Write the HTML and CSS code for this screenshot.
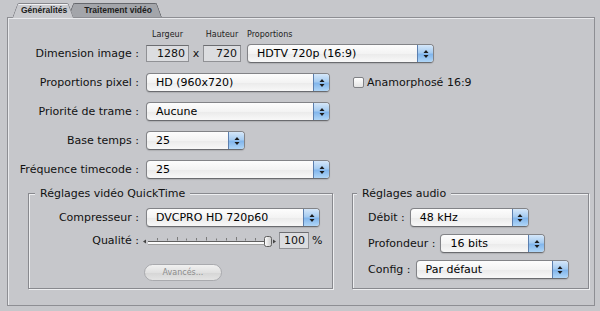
FILE: index.html
```html
<!DOCTYPE html>
<html lang="fr">
<head>
<meta charset="utf-8">
<title>Réglages</title>
<link rel="stylesheet" href="styles.css">
</head>
<body>
<div class="tabs">
  <div class="tab tab-active">Généralités</div>
  <div class="tab tab-inactive">Traitement vidéo</div>
</div>
<div class="panel">
  <div class="form">
    <div class="row row-head">
      <span></span>
      <div class="ctrls">
        <span class="hd hd-w">Largeur</span>
        <span class="hd hd-h">Hauteur</span>
        <span class="hd hd-p">Proportions</span>
      </div>
    </div>
    <div class="row">
      <span class="lbl">Dimension image :</span>
      <div class="ctrls">
        <span class="field f-w">1280</span><span class="times">x</span><span class="field f-h">720</span>
        <div class="select s-prop"><span class="val">HDTV 720p (16:9)</span><span class="arrow"><svg width="8" height="12" viewBox="0 0 8 12"><polygon points="1.5,5 6.5,5 4,2" fill="#1b1b1b"/><polygon points="1.5,7 6.5,7 4,10" fill="#1b1b1b"/></svg></span></div>
      </div>
    </div>
    <div class="row">
      <span class="lbl">Proportions pixel :</span>
      <div class="ctrls">
        <div class="select s-std"><span class="val">HD (960x720)</span><span class="arrow"><svg width="8" height="12" viewBox="0 0 8 12"><polygon points="1.5,5 6.5,5 4,2" fill="#1b1b1b"/><polygon points="1.5,7 6.5,7 4,10" fill="#1b1b1b"/></svg></span></div>
        <div class="check-wrap"><span class="checkbox"></span><span>Anamorphosé 16:9</span></div>
      </div>
    </div>
    <div class="row">
      <span class="lbl">Priorité de trame :</span>
      <div class="ctrls">
        <div class="select s-std"><span class="val">Aucune</span><span class="arrow"><svg width="8" height="12" viewBox="0 0 8 12"><polygon points="1.5,5 6.5,5 4,2" fill="#1b1b1b"/><polygon points="1.5,7 6.5,7 4,10" fill="#1b1b1b"/></svg></span></div>
      </div>
    </div>
    <div class="row">
      <span class="lbl">Base temps :</span>
      <div class="ctrls">
        <div class="select s-base"><span class="val">25</span><span class="arrow"><svg width="8" height="12" viewBox="0 0 8 12"><polygon points="1.5,5 6.5,5 4,2" fill="#1b1b1b"/><polygon points="1.5,7 6.5,7 4,10" fill="#1b1b1b"/></svg></span></div>
      </div>
    </div>
    <div class="row">
      <span class="lbl">Fréquence timecode :</span>
      <div class="ctrls">
        <div class="select s-std"><span class="val">25</span><span class="arrow"><svg width="8" height="12" viewBox="0 0 8 12"><polygon points="1.5,5 6.5,5 4,2" fill="#1b1b1b"/><polygon points="1.5,7 6.5,7 4,10" fill="#1b1b1b"/></svg></span></div>
      </div>
    </div>
  </div>

  <div class="groups">
    <div class="group g-video">
      <div class="gtitle">Réglages vidéo QuickTime</div>
      <div class="grow grow-a">
        <span class="lbl">Compresseur :</span>
        <div class="ctrls">
          <div class="select s-comp"><span class="val">DVCPRO HD 720p60</span><span class="arrow"><svg width="8" height="12" viewBox="0 0 8 12"><polygon points="1.5,5 6.5,5 4,2" fill="#1b1b1b"/><polygon points="1.5,7 6.5,7 4,10" fill="#1b1b1b"/></svg></span></div>
        </div>
      </div>
      <div class="grow grow-b">
        <span class="lbl">Qualité :</span>
        <div class="ctrls">
          <svg class="slider" width="134" height="16" viewBox="0 0 134 16">
            <defs>
              <linearGradient id="th" x1="0" y1="0" x2="1" y2="0">
                <stop offset="0" stop-color="#ffffff"/>
                <stop offset="1" stop-color="#c9c9c9"/>
              </linearGradient>
            </defs>
            <polygon points="0,8.5 3,6.5 3,10.5" fill="#444"/>
            <g stroke="#7a7a7a" stroke-width="1">
              <line x1="14.5" y1="5" x2="14.5" y2="7.5"/>
              <line x1="24.5" y1="5.5" x2="24.5" y2="7.5"/>
              <line x1="34.5" y1="4" x2="34.5" y2="7.5"/>
              <line x1="43.5" y1="5.5" x2="43.5" y2="7.5"/>
              <line x1="53.5" y1="5" x2="53.5" y2="7.5"/>
              <line x1="63.5" y1="4" x2="63.5" y2="7.5"/>
              <line x1="73.5" y1="5.5" x2="73.5" y2="7.5"/>
              <line x1="83.5" y1="5" x2="83.5" y2="7.5"/>
              <line x1="93.5" y1="4" x2="93.5" y2="7.5"/>
              <line x1="102.5" y1="5.5" x2="102.5" y2="7.5"/>
              <line x1="112.5" y1="5" x2="112.5" y2="7.5"/>
            </g>
            <rect x="5" y="8" width="118" height="1" fill="#5f5f5f"/>
            <rect x="5" y="9" width="118" height="2" fill="#fbfbfb"/>
            <rect x="5" y="11" width="118" height="1" fill="#a0a0a0"/>
            <rect x="121.5" y="3.5" width="7" height="10" rx="2" fill="url(#th)" stroke="#5e5e5e"/>
            <polygon points="130,6.5 133,8.5 130,10.5" fill="#444"/>
          </svg>
          <span class="field f-q">100</span><span class="pct">%</span>
        </div>
      </div>
      <div class="grow grow-c">
        <span></span>
        <div class="ctrls">
          <span class="btn">Avancés...</span>
        </div>
      </div>
    </div>

    <div class="group g-audio">
      <div class="gtitle gtitle-a">Réglages audio</div>
      <div class="arow arow-first">
        <span>Débit :</span>
        <div class="select s-debit"><span class="val">48 kHz</span><span class="arrow"><svg width="8" height="12" viewBox="0 0 8 12"><polygon points="1.5,5 6.5,5 4,2" fill="#1b1b1b"/><polygon points="1.5,7 6.5,7 4,10" fill="#1b1b1b"/></svg></span></div>
      </div>
      <div class="arow">
        <span>Profondeur :</span>
        <div class="select s-prof"><span class="val">16 bits</span><span class="arrow"><svg width="8" height="12" viewBox="0 0 8 12"><polygon points="1.5,5 6.5,5 4,2" fill="#1b1b1b"/><polygon points="1.5,7 6.5,7 4,10" fill="#1b1b1b"/></svg></span></div>
      </div>
      <div class="arow">
        <span>Config :</span>
        <div class="select s-conf"><span class="val">Par défaut</span><span class="arrow"><svg width="8" height="12" viewBox="0 0 8 12"><polygon points="1.5,5 6.5,5 4,2" fill="#1b1b1b"/><polygon points="1.5,7 6.5,7 4,10" fill="#1b1b1b"/></svg></span></div>
      </div>
    </div>
  </div>
</div>
</body>
</html>
```

FILE: styles.css
```css
html, body {
  margin: 0;
  padding: 0;
}

body {
  width: 600px;
  height: 311px;
  overflow: hidden;
  background: #c6c7cb;
  font-family: "DejaVu Sans", sans-serif;
  font-size: 11px;
  color: #111;
}

/* ---------- tabs ---------- */
.tabs {
  display: flex;
  align-items: flex-start;
  margin-top: 3px;
  padding-left: 12px;
  height: 15px;
  position: relative;
  z-index: 1;
}

.tab {
  position: relative;
  height: 15px;
  line-height: 14px;
  font-family: "Liberation Sans", sans-serif;
  font-weight: bold;
  font-size: 8.5px;
  color: #222;
  white-space: nowrap;
}

.tab-active {
  z-index: 2;
  padding: 0 7px 0 9px;
}

.tab-inactive {
  z-index: 1;
  height: 14px;
  margin-left: -6px;
  padding: 0 10px 0 16px;
  color: #1c1c1c;
}

.tab::before,
.tab::after {
  content: "";
  position: absolute;
  top: 0;
  bottom: 0;
  width: 60%;
  z-index: -1;
  border-top: 1px solid;
}

.tab::before {
  left: 0;
  border-left: 1px solid;
  border-top-left-radius: 2px;
  transform: skewX(-20deg);
  transform-origin: left bottom;
}

.tab::after {
  right: 0;
  border-right: 1px solid;
  border-top-right-radius: 2px;
  transform: skewX(20deg);
  transform-origin: right bottom;
}

.tab-active::before,
.tab-active::after {
  background: #c9cace;
  border-color: #85868b;
  box-shadow: inset 0 1px 0 #f2f2f4;
}

.tab-inactive::before,
.tab-inactive::after {
  background: #a3a5aa;
  border-color: #66686d;
}

/* ---------- panel ---------- */
.panel {
  margin: -1px 0 0 7px;
  width: 586px;
  height: 287px;
  border: 1px solid #8d8e93;
  box-shadow: inset 1px 1px 0 #e9eaed;
}

.form {
  display: flex;
  flex-direction: column;
  gap: 10px;
  padding-top: 12px;
}

.row {
  display: grid;
  grid-template-columns: 131px auto;
  column-gap: 7px;
  align-items: center;
  height: 19px;
}

.row-head {
  height: 10px;
  margin-bottom: -6px;
}

.lbl {
  text-align: right;
  white-space: nowrap;
}

.ctrls {
  display: flex;
  align-items: center;
}

.hd {
  font-size: 8px;
  line-height: 10px;
  color: #222;
  white-space: nowrap;
}

.hd-w { width: 43px; text-align: center; }
.hd-h { width: 38px; margin-left: 14px; text-align: center; }
.hd-p { margin-left: 6px; }

/* ---------- fields ---------- */
.field {
  box-sizing: border-box;
  height: 17px;
  background: #dcdde0;
  border: 1px solid #909195;
  border-top-color: #6c6d71;
  text-align: right;
  padding-right: 3px;
  line-height: 15px;
}

.f-w { width: 43px; }
.f-h { width: 38px; }
.times { width: 14px; text-align: center; }
.f-q { width: 30px; margin-left: 2px; }
.pct { margin-left: 3px; }

/* ---------- popup buttons ---------- */
.select {
  display: flex;
  box-sizing: border-box;
  height: 19px;
  border: 1px solid #828387;
  border-bottom-color: #6a6b6f;
  border-radius: 4px;
  background: linear-gradient(#fdfdfd, #f3f3f3 50%, #eaeaea 51%, #f8f8f8);
  box-shadow: 0 1px 1px rgba(0, 0, 0, 0.12);
  overflow: hidden;
}

.select .val {
  flex: 1;
  padding-left: 9px;
  line-height: 17px;
  white-space: nowrap;
  color: #000;
}

.select .arrow {
  width: 15px;
  border-left: 1px solid #5c7fae;
  background: linear-gradient(#d5e7f9, #a6ccf1 45%, #82b6ec 55%, #b0d6f7);
  display: flex;
  align-items: center;
  justify-content: center;
}

.s-prop { margin-left: 6px; width: 187px; }
.s-std { width: 184px; }
.s-base { width: 99px; }
.s-comp { width: 174px; }
.s-debit { width: 119px; }
.s-prof { width: 105px; }
.s-conf { width: 153px; }

/* ---------- checkbox ---------- */
.check-wrap {
  display: flex;
  align-items: center;
  gap: 3px;
  margin-left: 23px;
}

.checkbox {
  box-sizing: border-box;
  width: 11px;
  height: 11px;
  border: 1px solid #808185;
  border-radius: 2px;
  background: linear-gradient(#ffffff, #e4e4e4);
}

/* ---------- groups ---------- */
.groups {
  display: flex;
  gap: 19px;
  margin: 14px 0 0 20px;
}

.group {
  box-sizing: border-box;
  height: 96px;
  border: 1px solid #88898e;
  box-shadow: inset 1px 1px 0 #eeeff1, 1px 1px 0 #eeeff1;
}

.g-video { width: 305px; }
.g-audio { width: 237px; }

.gtitle {
  width: fit-content;
  margin: -7px 0 0 6px;
  padding: 0 5px;
  background: #c6c7cb;
  line-height: 13px;
  white-space: nowrap;
}

.gtitle-a { margin-left: 4px; }

.grow {
  display: grid;
  grid-template-columns: 110px auto;
  column-gap: 7px;
  align-items: center;
}

.grow-a { margin-top: 8px; height: 19px; }
.grow-b { margin-top: 5px; height: 17px; }
.grow-c { margin-top: 15px; height: 17px; }

.slider {
  display: block;
  margin-left: -3px;
}

.btn {
  box-sizing: border-box;
  margin-left: -2px;
  width: 78px;
  height: 17px;
  border: 1px solid #a9aaae;
  border-radius: 9px;
  background: linear-gradient(#f1f1f1, #e0e0e0 50%, #d5d5d5 51%, #e3e3e3);
  color: #8c8c8c;
  font-size: 8px;
  line-height: 15px;
  text-align: center;
}

.arow {
  display: flex;
  align-items: center;
  gap: 5px;
  height: 19px;
  margin: 7px 0 0 15px;
  white-space: nowrap;
}

.arow-first { margin-top: 8px; }
```
